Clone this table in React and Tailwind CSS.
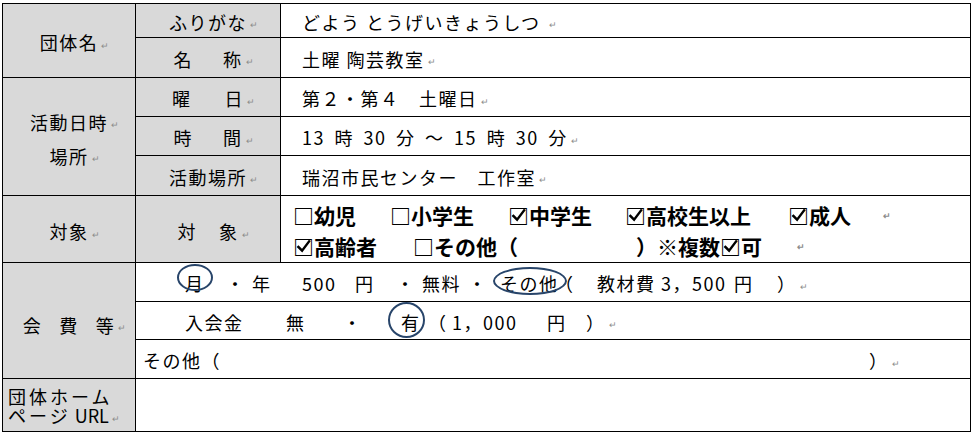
import React from 'react';

const Mark = ({ className = '' }) => (
  <span className={`inline-block w-0 whitespace-nowrap align-middle text-[9px] leading-none tracking-normal text-[#8c8c8c] ${className}`}>
    <span className="ml-[3px]">↵</span>
  </span>
);

const Ring = ({ className = '' }) => (
  <span className={`pointer-events-none absolute rounded-[50%] border-2 border-[#28456a] ${className}`} />
);

// □ with a drawn tick over it
const Checked = () => (
  <span className="relative">
    □
    <svg className="absolute left-[3px] top-[8px] h-[15px] w-[15px]" viewBox="0 0 16 16">
      <path d="M2.5 8.5 L6.5 12.5 L14 2.5" fill="none" stroke="#000" strokeWidth="2.6" strokeLinecap="square" />
    </svg>
  </span>
);

const App = () => {
  return (
    <div className="min-h-screen bg-white font-['Noto_Sans_CJK_JP',sans-serif] text-black">
      <div className="ml-[2px] pt-[3px]">
        <div className="grid w-[969px] grid-cols-[132px_144px_689px] grid-rows-[33px_39px_38px_38px_39px_66px_38px_37px_38px_52px] gap-px border border-black bg-black text-[18px] leading-none tracking-[1.5px]">
          {/* 団体名 */}
          <div className="col-start-1 row-start-1 row-span-2 flex items-center justify-center bg-[#d9d9d9] pt-[3px]">
            <span>団体名<Mark /></span>
          </div>
          <div className="col-start-2 row-start-1 flex items-center justify-center bg-[#d9d9d9] pt-[2px]">
            <span>ふりがな<Mark /></span>
          </div>
          <div className="col-start-3 row-start-1 flex items-center whitespace-nowrap bg-white pl-[21px] pt-[2px]">
            <span>どよう とうげいきょうしつ <Mark /></span>
          </div>
          <div className="col-start-2 row-start-2 flex items-center justify-center gap-[30px] bg-[#d9d9d9] pt-[2px]">
            <span>名</span>
            <span>称<Mark /></span>
          </div>
          <div className="col-start-3 row-start-2 flex items-center whitespace-nowrap bg-white pl-[21px] pt-[2px]">
            <span>土曜 陶芸教室<Mark /></span>
          </div>

          {/* 活動日時 場所 */}
          <div className="col-start-1 row-start-3 row-span-3 flex flex-col items-center justify-center bg-[#d9d9d9] pt-[4px] leading-[34px]">
            <span>活動日時<Mark /></span>
            <span>場所<Mark /></span>
          </div>
          <div className="col-start-2 row-start-3 flex items-center justify-center gap-[33px] bg-[#d9d9d9] pt-[2px]">
            <span>曜</span>
            <span>日<Mark /></span>
          </div>
          <div className="col-start-3 row-start-3 flex items-center whitespace-nowrap bg-white pl-[21px] pt-[2px]">
            <span>第２・第４　土曜日<Mark /></span>
          </div>
          <div className="col-start-2 row-start-4 flex items-center justify-center gap-[30px] bg-[#d9d9d9] pt-[2px]">
            <span>時</span>
            <span>間<Mark /></span>
          </div>
          <div className="col-start-3 row-start-4 flex items-center whitespace-nowrap bg-white pl-[21px] pt-[2px] [word-spacing:4px]">
            <span>13 時 30 分 ～ 15 時 30 分<Mark /></span>
          </div>
          <div className="col-start-2 row-start-5 flex items-center justify-center bg-[#d9d9d9] pt-[2px]">
            <span>活動場所<Mark /></span>
          </div>
          <div className="col-start-3 row-start-5 flex items-center whitespace-nowrap bg-white pl-[21px] pt-[2px]">
            <span>瑞沼市民センター　工作室<Mark /></span>
          </div>

          {/* 対象 */}
          <div className="col-start-1 row-start-6 flex items-center justify-center bg-[#d9d9d9] pt-[4px]">
            <span>対象<Mark /></span>
          </div>
          <div className="col-start-2 row-start-6 flex items-center justify-center gap-[22px] bg-[#d9d9d9] pt-[4px]">
            <span>対</span>
            <span>象<Mark /></span>
          </div>
          <div className="col-start-3 row-start-6 flex flex-col whitespace-nowrap bg-white pl-[12px] pt-[4px] text-[21px] font-bold leading-[31px] tracking-normal">
            <div className="flex items-center">
              <span className="w-[97px] shrink-0">□幼児</span>
              <span className="w-[118px] shrink-0">□小学生</span>
              <span className="w-[117px] shrink-0"><Checked />中学生</span>
              <span className="w-[163px] shrink-0"><Checked />高校生以上</span>
              <span className="w-[92px] shrink-0"><Checked />成人</span>
              <Mark />
            </div>
            <div className="flex items-center">
              <span className="w-[120px] shrink-0"><Checked />高齢者</span>
              <span className="w-[223px] shrink-0">□その他（</span>
              <span className="w-[21px] shrink-0">）</span>
              <span className="w-[137px] shrink-0">※複数<Checked />可</span>
              <Mark />
            </div>
          </div>

          {/* 会費等 */}
          <div className="col-start-1 row-start-7 row-span-3 flex items-center justify-center gap-[17px] bg-[#d9d9d9] pt-[8px]">
            <span>会</span>
            <span>費</span>
            <span>等<Mark /></span>
          </div>
          <div className="relative col-start-2 col-span-2 row-start-7 flex items-center whitespace-nowrap bg-white pl-[49px] pt-[2px]">
            <span className="w-[41px] shrink-0">月</span>
            <span className="w-[26px] shrink-0">・</span>
            <span className="w-[50px] shrink-0">年</span>
            <span className="w-[53px] shrink-0">500</span>
            <span className="w-[41px] shrink-0">円</span>
            <span className="w-[26px] shrink-0">・</span>
            <span className="w-[46px] shrink-0">無料</span>
            <span className="w-[32px] shrink-0">・</span>
            <span className="w-[55px] shrink-0">その他</span>
            <span className="w-[42px] shrink-0">（</span>
            <span className="w-[64px] shrink-0">教材費</span>
            <span className="w-[73px] shrink-0">3，500</span>
            <span className="w-[43px] shrink-0">円</span>
            <span>）<Mark /></span>
            <Ring className="left-[41px] top-[1px] h-[27px] w-[36px]" />
            <Ring className="left-[357px] top-[4px] h-[28px] w-[74px]" />
          </div>
          <div className="relative col-start-2 col-span-2 row-start-8 flex items-center whitespace-nowrap bg-white pl-[49px] pt-[2px]">
            <span className="w-[101px] shrink-0">入会金</span>
            <span className="w-[57px] shrink-0">無</span>
            <span className="w-[58px] shrink-0">・</span>
            <span className="w-[27px] shrink-0">有</span>
            <span className="w-[24px] shrink-0">（</span>
            <span className="w-[95px] shrink-0">1，000</span>
            <span className="w-[39px] shrink-0">円</span>
            <span>）<Mark /></span>
            <Ring className="left-[252px] top-0 h-[36px] w-[37px]" />
          </div>
          <div className="col-start-2 col-span-2 row-start-9 flex items-center whitespace-nowrap bg-white pl-[7px] pt-[2px]">
            <span className="w-[726px] shrink-0">その他（</span>
            <span>）<Mark /></span>
          </div>

          {/* URL */}
          <div className="col-start-1 row-start-10 flex flex-col justify-center whitespace-nowrap bg-[#d9d9d9] pl-[5px] pt-[2px] leading-[19px] tracking-[3px]">
            <span>団体ホーム</span>
            <span>ページ<span className="tracking-normal"> URL</span><Mark /></span>
          </div>
          <div className="col-start-2 col-span-2 row-start-10 bg-white" />
        </div>
      </div>
    </div>
  );
};

export default App;
